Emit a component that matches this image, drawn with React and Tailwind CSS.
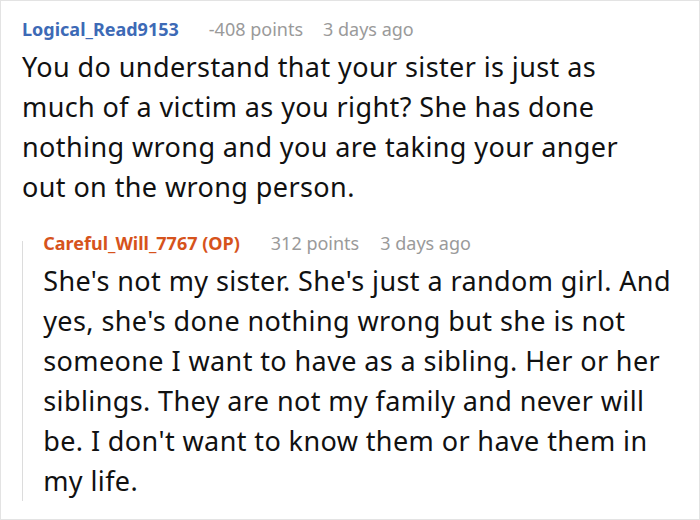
export default function App() {
    return (
        <div className="w-[700px] h-[520px] bg-white border border-[#e3e3e3] overflow-hidden" style={{ fontFamily: '"Noto Sans", sans-serif' }}>
            <div className="pl-[21px] pr-[25px] pt-[12px]">
                <div className="flex items-baseline text-[18px] leading-[32px]">
                    <span className="font-bold text-[#3d6ab6]">Logical_Read9153</span>
                    <span className="ml-[30px] text-[#9a9a9a]">-408 points</span>
                    <span className="ml-[20px] text-[#9a9a9a]">3 days ago</span>
                </div>
                <p className="mt-[2px] max-w-[640px] text-[27px] leading-[40px] tracking-[0.4px] text-[#111]">
                    You do understand that your sister is just as much of a victim as you right? She has done nothing wrong and you are taking your anger out on the wrong person.
                </p>

                <div className="mt-[20px] flex">
                    <div className="w-px bg-[#dcdcdc] mt-[14px]" />
                    <div className="pl-[21px]">
                        <div className="flex items-baseline text-[18px] leading-[32px]">
                            <span className="font-bold text-[#d6531c]">Careful_Will_7767 (OP)</span>
                            <span className="ml-[31px] text-[#9a9a9a]">312 points</span>
                            <span className="ml-[21px] text-[#9a9a9a]">3 days ago</span>
                        </div>
                        <p className="mt-[2px] text-[27px] leading-[40px] tracking-[0.4px] text-[#111]">
                            She's not my sister. She's just a random girl. And yes, she's done nothing wrong but she is not someone I want to have as a sibling. Her or her siblings. They are not my family and never will be. I don't want to know them or have them in my life.
                        </p>
                    </div>
                </div>
            </div>
        </div>
    );
}
